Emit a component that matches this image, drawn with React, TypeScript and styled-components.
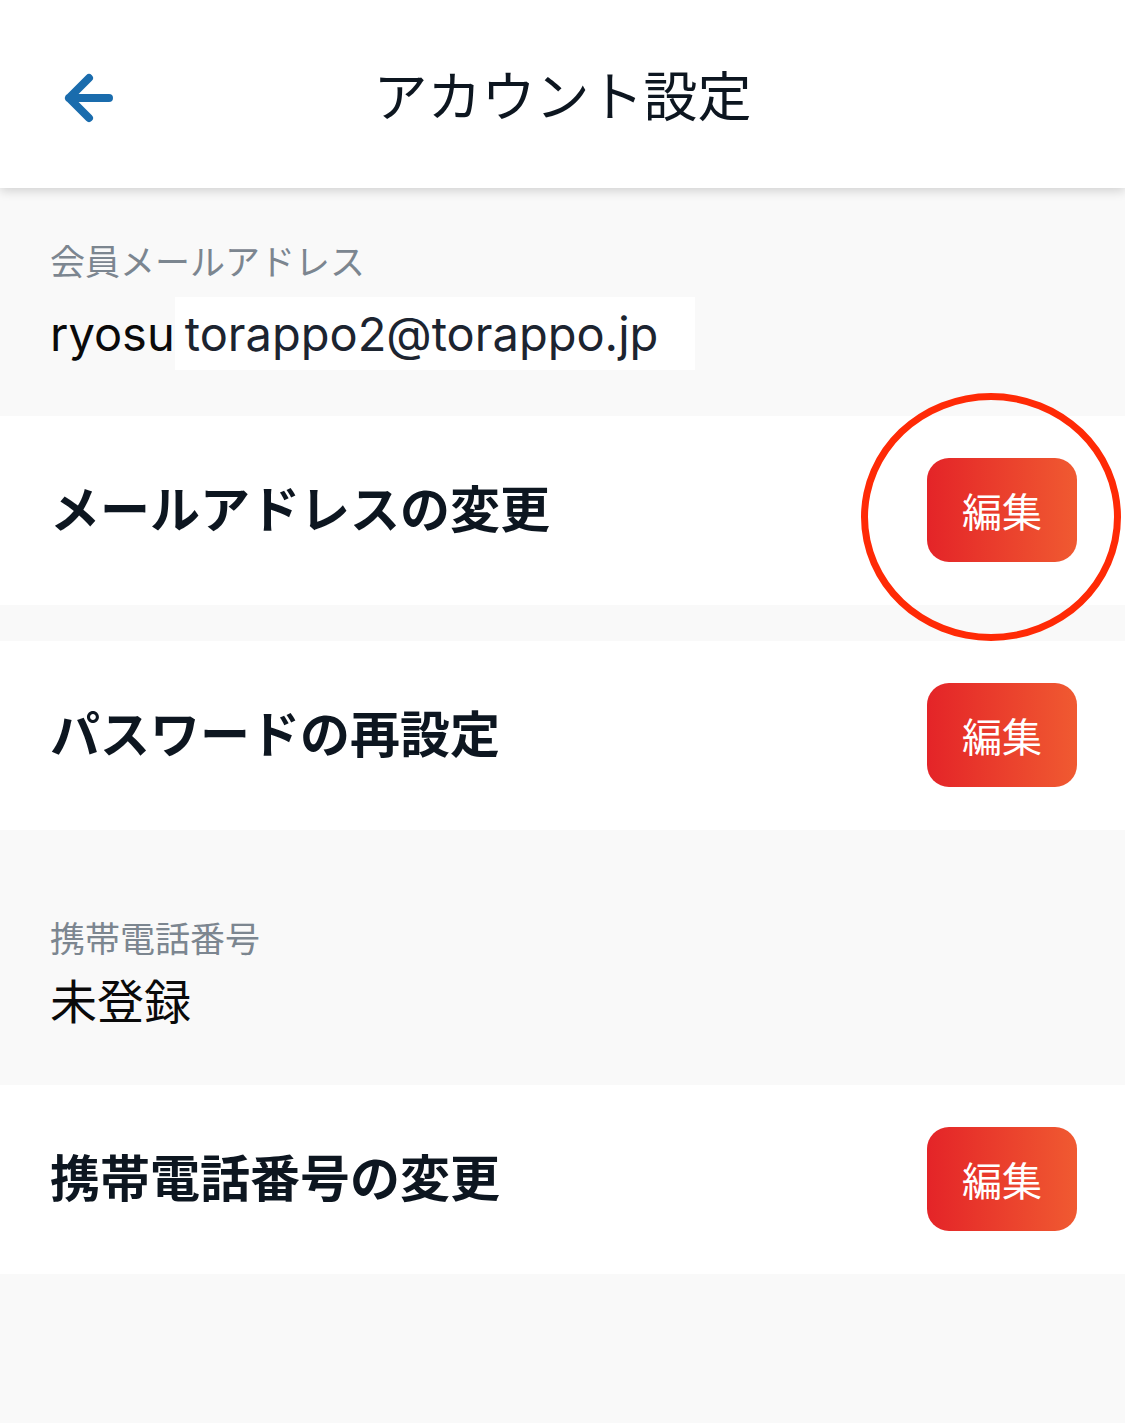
import React from 'react';
import styled, {createGlobalStyle} from 'styled-components';

const GlobalStyle = createGlobalStyle`
  html, body {
    margin: 0;
    padding: 0;
    background: #f9f9f9;
  }
  body {
    font-family: Inter, "Noto Sans CJK JP", sans-serif;
    color: #0d1620;
  }
`;

type EditRowProps = {
  title: string;
  highlighted?: boolean;
};

const EditRow = ({title, highlighted}: EditRowProps) => (
  <Row>
    <RowTitle>{title}</RowTitle>
    <EditButton type="button">編集</EditButton>
    {highlighted && <Highlight />}
  </Row>
);

export default function App() {
  return (
    <>
      <GlobalStyle />
      <Page>
        <Header>
          <BackButton type="button" aria-label="戻る">
            <svg width="56" height="56" viewBox="0 0 56 56" fill="none">
              <path
                d="M49 28H9M29 8L9 28L29 48"
                stroke="#1a6cad"
                strokeWidth="8"
                strokeLinecap="round"
                strokeLinejoin="round"
              />
            </svg>
          </BackButton>
          <Title>アカウント設定</Title>
          <span />
        </Header>

        <InfoBlock $top={47} $bottom={46}>
          <Label>会員メールアドレス</Label>
          <EmailLine>
            ryosu<Masked>torappo2@torappo.jp</Masked>
          </EmailLine>
        </InfoBlock>

        <EditRow title="メールアドレスの変更" highlighted />
        <Spacer />
        <EditRow title="パスワードの再設定" />

        <InfoBlock $top={82} $bottom={53}>
          <Label>携帯電話番号</Label>
          <Value>未登録</Value>
        </InfoBlock>

        <EditRow title="携帯電話番号の変更" />
      </Page>
    </>
  );
}

const Page = styled.div`
  width: 1125px;
  min-height: 1423px;
  background: #f9f9f9;
  overflow: hidden;
`;

const Header = styled.header`
  position: relative;
  z-index: 1;
  height: 188px;
  display: grid;
  grid-template-columns: 1fr auto 1fr;
  align-items: center;
  background: #fff;
  box-shadow: 0 3px 10px rgba(0, 0, 0, 0.16);
`;

const BackButton = styled.button`
  justify-self: start;
  margin-left: 60px;
  margin-top: 8px;
  padding: 0;
  border: none;
  background: none;
  display: flex;
  cursor: pointer;
`;

const Title = styled.h1`
  margin: 0;
  font-family: "Noto Sans CJK JP", sans-serif;
  font-size: 54px;
  font-weight: 400;
  line-height: 1;
  color: #0d1620;
`;

const InfoBlock = styled.section<{$top: number; $bottom: number}>`
  display: flex;
  flex-direction: column;
  align-items: flex-start;
  padding: ${({$top}) => $top}px 50px ${({$bottom}) => $bottom}px;
  background: #f9f9f9;
`;

const Label = styled.div`
  font-family: "Noto Sans CJK JP", sans-serif;
  font-size: 35px;
  line-height: 49px;
  color: #7c8690;
`;

const EmailLine = styled.div`
  margin-top: 13px;
  display: flex;
  align-items: center;
  height: 73px;
  font-family: Inter, "Noto Sans CJK JP", sans-serif;
  font-size: 47px;
  color: #0a0a0a;
`;

const Masked = styled.span`
  display: flex;
  align-items: center;
  height: 73px;
  padding: 0 37px 0 10px;
  background: #fff;
  color: #1c2430;
`;

const Value = styled.div`
  margin-top: 5px;
  font-family: "Noto Sans CJK JP", sans-serif;
  font-size: 47px;
  line-height: 66px;
  color: #0a0a0a;
`;

const Row = styled.div`
  position: relative;
  height: 189px;
  display: flex;
  align-items: center;
  justify-content: space-between;
  padding: 0 48px 0 50px;
  box-sizing: border-box;
  background: #fff;
`;

const RowTitle = styled.div`
  padding-bottom: 9px;
  font-family: "Noto Sans CJK JP", sans-serif;
  font-size: 50px;
  font-weight: 700;
  color: #0d1620;
`;

const EditButton = styled.button`
  width: 150px;
  height: 104px;
  margin-top: -2px;
  border: none;
  border-radius: 22px;
  background: linear-gradient(90deg, #e42428 0%, #f05a31 100%);
  color: #fff;
  font-family: "Noto Sans CJK JP", sans-serif;
  font-size: 40px;
  font-weight: 400;
  cursor: pointer;
`;

const Highlight = styled.span`
  position: absolute;
  left: 861px;
  top: -23px;
  width: 260px;
  height: 248px;
  box-sizing: border-box;
  border: 7px solid #ff2a06;
  border-radius: 50%;
  pointer-events: none;
`;

const Spacer = styled.div`
  height: 36px;
`;
